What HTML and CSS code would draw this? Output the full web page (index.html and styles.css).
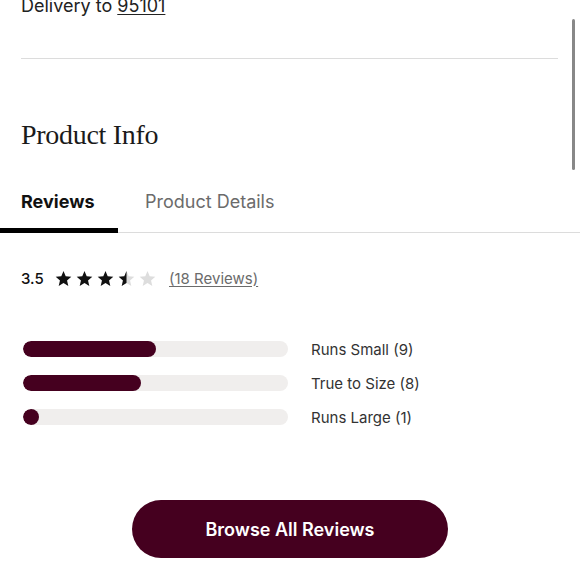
FILE: index.html
```html
<!DOCTYPE html>
<html>
<head>
<meta charset="utf-8">
<link rel="stylesheet" href="styles.css">
</head>
<body>
<div class="page">
  <div class="wrap">
    <p class="delivery">Delivery to <a class="zip">95101</a></p>
    <hr class="divider">
    <h2 class="title">Product Info</h2>
  </div>
  <div class="tabs">
    <div class="tab active">Reviews</div>
    <div class="tab">Product Details</div>
  </div>
  <div class="wrap">
    <div class="rating">
      <span class="score">3.5</span>
      <span class="stars">
        <svg class="star" viewBox="0 0 24 24"><path d="M12 1.5l3.1 7.3 7.9.7-6 5.2 1.8 7.8L12 18.4l-6.8 4.1L7 14.7l-6-5.2 7.9-.7z" fill="#111"/></svg>
        <svg class="star" viewBox="0 0 24 24"><path d="M12 1.5l3.1 7.3 7.9.7-6 5.2 1.8 7.8L12 18.4l-6.8 4.1L7 14.7l-6-5.2 7.9-.7z" fill="#111"/></svg>
        <svg class="star" viewBox="0 0 24 24"><path d="M12 1.5l3.1 7.3 7.9.7-6 5.2 1.8 7.8L12 18.4l-6.8 4.1L7 14.7l-6-5.2 7.9-.7z" fill="#111"/></svg>
        <svg class="star" viewBox="0 0 24 24"><defs><clipPath id="half"><rect x="0" y="0" width="12" height="24"/></clipPath></defs><path d="M12 1.5l3.1 7.3 7.9.7-6 5.2 1.8 7.8L12 18.4l-6.8 4.1L7 14.7l-6-5.2 7.9-.7z" fill="#ddd"/><path d="M12 1.5l3.1 7.3 7.9.7-6 5.2 1.8 7.8L12 18.4l-6.8 4.1L7 14.7l-6-5.2 7.9-.7z" fill="#111" clip-path="url(#half)"/></svg>
        <svg class="star" viewBox="0 0 24 24"><path d="M12 1.5l3.1 7.3 7.9.7-6 5.2 1.8 7.8L12 18.4l-6.8 4.1L7 14.7l-6-5.2 7.9-.7z" fill="#ddd"/></svg>
      </span>
      <a class="count">(18 Reviews)</a>
    </div>
    <div class="fit">
      <div class="fit-row">
        <div class="track"><div class="fill" style="width:50%"></div></div>
        <span class="fit-label">Runs Small (9)</span>
      </div>
      <div class="fit-row">
        <div class="track"><div class="fill" style="width:44.4%"></div></div>
        <span class="fit-label">True to Size (8)</span>
      </div>
      <div class="fit-row">
        <div class="track"><div class="fill" style="width:5.6%"></div></div>
        <span class="fit-label">Runs Large (1)</span>
      </div>
    </div>
    <div class="actions">
      <button class="browse">Browse All Reviews</button>
    </div>
  </div>
  <div class="scrollbar"></div>
</div>
</body>
</html>
```
FILE: styles.css
```css
* { box-sizing: border-box; }
html, body { margin: 0; padding: 0; background: #fff; }
body { font-family: Inter, "Liberation Sans", sans-serif; color: #1a1a1a; }
.page { position: relative; width: 580px; height: 580px; overflow: hidden; }
.wrap { padding: 0 22px 0 21px; }
.delivery { margin: -6px 0 0; font-size: 18px; line-height: 24px; color: #222; }
.zip { text-decoration: underline; text-underline-offset: 2px; color: #222; }
.divider { border: 0; height: 1px; background: #dcdcdc; margin: 40px 0 0; }
.title { margin: 60px 0 0; font-family: "Liberation Serif", serif; font-weight: 400; font-size: 28px; line-height: 32px; color: #1a1a1a; letter-spacing: -0.3px; }
.tabs { display: flex; margin-top: 39px; border-bottom: 1px solid #dcdcdc; }
.tab { font-size: 18px; line-height: 24px; padding: 0 0 14px 21px; color: #6b6b6b; }
.tab.active { font-weight: 700; color: #111; width: 118px; border-bottom: 5px solid #000; margin-bottom: -1px; padding-left: 21px; }
.tab + .tab { padding-left: 27px; }
.rating { display: flex; align-items: center; margin-top: 33px; height: 24px; }
.score { font-size: 15px; font-weight: 500; color: #111; width: 34px; }
.stars { display: flex; gap: 4px; }
.star { width: 17px; height: 17px; display: block; }
.count { margin-left: 13px; font-size: 15px; color: #6b6b6b; text-decoration: underline; text-underline-offset: 2px; }
.fit { margin-top: 51px; display: flex; flex-direction: column; gap: 18px; }
.fit-row { display: flex; align-items: center; height: 16px; }
.track { width: 265px; height: 16px; margin-left: 2px; background: #f0eeed; border-radius: 8px; overflow: hidden; }
.fill { height: 100%; min-width: 16px; background: #45001f; border-radius: 8px; }
.fit-label { margin-left: 23px; font-size: 15px; color: #333; }
.actions { display: flex; justify-content: center; margin-top: 75px; padding-left: 1px; }
.browse { width: 316px; height: 58px; border: 0; border-radius: 29px; background: #45001f; color: #fff; font-family: inherit; font-size: 18px; font-weight: 600; }
.scrollbar { position: absolute; right: 5px; top: 19px; width: 3px; height: 151px; background: #888; border-radius: 2px; }
```
